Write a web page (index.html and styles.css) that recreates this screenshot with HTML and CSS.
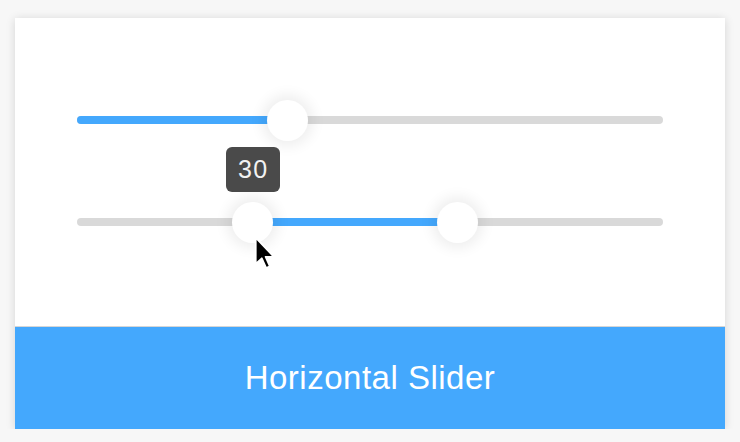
FILE: index.html
```html
<!DOCTYPE html>
<html>
<head>
<meta charset="utf-8">
<link rel="stylesheet" href="styles.css">
</head>
<body>
<div class="card">
  <div class="stage">
    <div class="slider">
      <div class="track">
        <div class="fill" style="left:0;width:36%"></div>
        <div class="thumb" style="left:36%"></div>
      </div>
    </div>
    <div class="slider">
      <div class="track">
        <div class="fill" style="left:30%;width:35%"></div>
        <div class="thumb" style="left:30%">
          <div class="tip">30</div>
          <svg class="cursor" width="22" height="33" viewBox="0 0 13 19.5">
            <path d="M1 1 L1 16.5 L4.6 13.2 L7.2 19 L9.4 18 L6.9 12.3 L11.8 12.3 Z" fill="#000" stroke="#fff" stroke-width="1.1" stroke-linejoin="round"/>
          </svg>
        </div>
        <div class="thumb" style="left:65%"></div>
      </div>
    </div>
  </div>
  <div class="footer">Horizontal Slider</div>
</div>
</body>
</html>
```

FILE: styles.css
```css
html, body {
  margin: 0;
  padding: 0;
  background: #f7f7f7;
}
body {
  padding: 18px 15px 0 15px;
  font-family: "Liberation Sans", Arial, sans-serif;
}
.card {
  width: 710px;
  height: 411px;
  background: #fff;
  box-shadow: 0 1px 9px rgba(0, 0, 0, 0.14);
  display: flex;
  flex-direction: column;
}
.stage {
  height: 308px;
  padding: 82px 62px 0 62px;
  box-sizing: border-box;
  display: flex;
  flex-direction: column;
  gap: 62px;
}
.slider {
  height: 40px;
  display: flex;
  align-items: center;
}
.track {
  position: relative;
  width: 100%;
  height: 8px;
  border-radius: 4px;
  background: #d9d9d9;
}
.fill {
  position: absolute;
  top: 0;
  bottom: 0;
  background: #44a8fd;
  border-radius: 4px;
}
.thumb {
  position: absolute;
  top: 50%;
  width: 41px;
  height: 41px;
  margin: -20.5px 0 0 -20.5px;
  border-radius: 50%;
  background: #fff;
  box-shadow: 0 0 14px 5px rgba(0, 0, 0, 0.07);
}
.tip {
  position: absolute;
  left: 50%;
  bottom: 100%;
  margin-bottom: 10px;
  transform: translateX(-50%);
  width: 54px;
  height: 45px;
  border-radius: 6px;
  background: #4a4a4a;
  color: #f2f2f2;
  font-size: 25px;
  letter-spacing: 1.5px;
  display: flex;
  align-items: center;
  justify-content: center;
  padding-left: 1px;
  box-sizing: border-box;
}
.cursor {
  position: absolute;
  left: 22px;
  top: 34px;
}
.footer {
  flex: 1;
  background: #44a8fd;
  border-top: 1px solid #d6d6d6;
  color: #fff;
  font-size: 33px;
  letter-spacing: 0.5px;
  display: flex;
  align-items: center;
  justify-content: center;
}
```
